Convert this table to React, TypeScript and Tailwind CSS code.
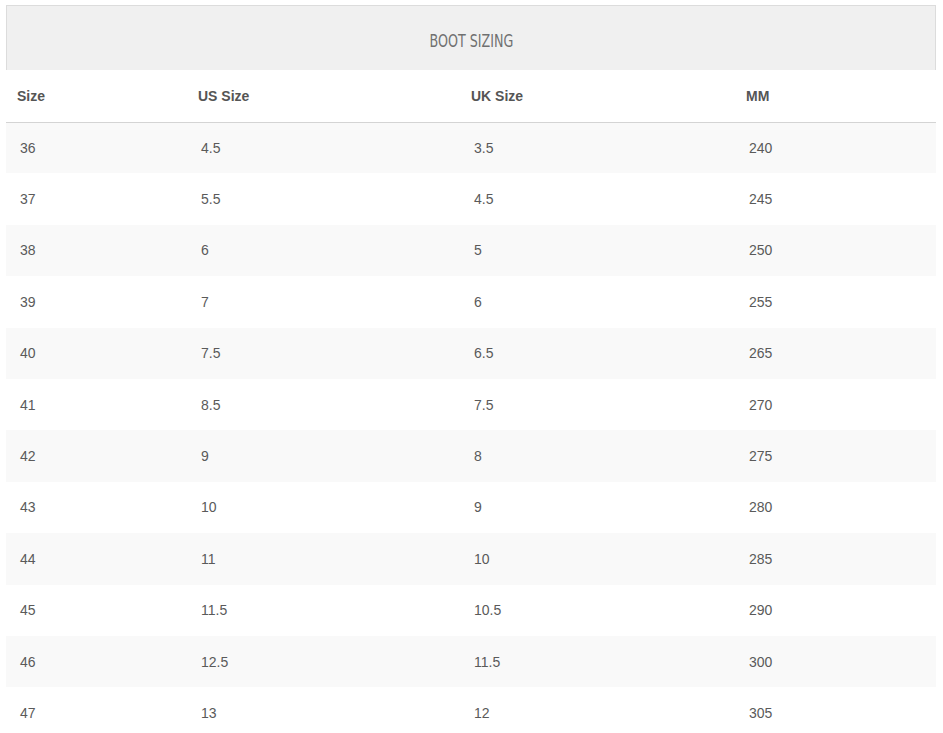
import React from 'react';

const rows = [
  ['36', '4.5', '3.5', '240'],
  ['37', '5.5', '4.5', '245'],
  ['38', '6', '5', '250'],
  ['39', '7', '6', '255'],
  ['40', '7.5', '6.5', '265'],
  ['41', '8.5', '7.5', '270'],
  ['42', '9', '8', '275'],
  ['43', '10', '9', '280'],
  ['44', '11', '10', '285'],
  ['45', '11.5', '10.5', '290'],
  ['46', '12.5', '11.5', '300'],
  ['47', '13', '12', '305'],
];

const headers = ['Size', 'US Size', 'UK Size', 'MM'];
const widths = ['w-[181px]', 'w-[273px]', 'w-[275px]', 'w-[201px]'];

export default function App() {
  return (
    <div className="bg-white min-h-screen pt-[5px] px-[6px] font-['Liberation_Sans',Arial,sans-serif]">
      <div className="w-[930px]">
        {/* title bar */}
        <div className="h-[65px] pt-[8px] bg-[#f0f0f0] border border-b-0 border-[#dcdcdc] flex items-center justify-center">
          <span className="font-['Liberation_Sans_Narrow','DejaVu_Sans_Condensed',sans-serif] [font-stretch:condensed] text-[17px] font-light text-[#707070] scale-x-[0.83]">
            BOOT SIZING
          </span>
        </div>

        <table className="w-[930px] table-fixed border-collapse">
          <thead>
            <tr className="h-[52px] border-b border-[#d4d4d4]">
              {headers.map((h, i) => (
                <th key={h} className={`${widths[i]} text-left pl-[11px] pt-[2px] text-[14px] font-bold text-[#555]`}>
                  {h}
                </th>
              ))}
            </tr>
          </thead>
          <tbody>
            {rows.map((r, idx) => (
              <tr key={r[0]} className={idx % 2 === 0 ? 'bg-[#f9f9f9]' : 'bg-white'}>
                {r.map((c, i) => (
                  <td key={i} className="h-[51.4px] pl-[14px] text-[14px] text-[#5a5a5a] leading-5">
                    {c}
                  </td>
                ))}
              </tr>
            ))}
          </tbody>
        </table>
      </div>
    </div>
  );
}
